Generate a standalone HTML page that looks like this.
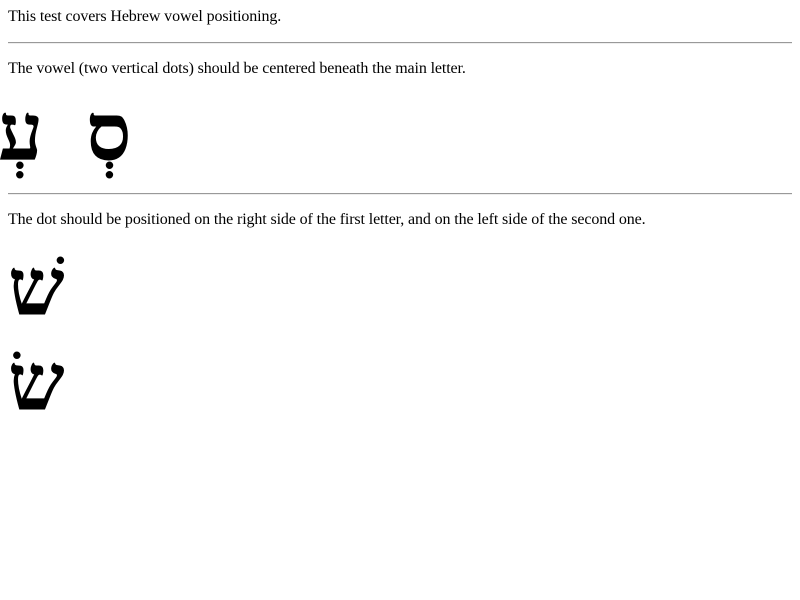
<!DOCTYPE html>
<html><head><meta charset="utf-8"><style>
body{margin:0;font-family:"Liberation Serif",serif;font-size:16px;color:#000;background:#fff}
.t{position:absolute;left:8px;white-space:nowrap;letter-spacing:-0.12px}
.hr{position:absolute;left:8px;width:784px;height:0;border-top:1px solid #999;border-bottom:1px solid #eee}
.h{position:absolute;font-size:80px;font-weight:bold;line-height:1;white-space:nowrap;font-family:"Liberation Serif","DejaVu Serif",serif}
</style></head><body>
<div class="t" style="top:8px">This test covers Hebrew vowel positioning.</div>
<div class="hr" style="top:42px"></div>
<div class="t" style="top:60px">The vowel (two vertical dots) should be centered beneath the main letter.</div>
<div class="h" style="left:-2px;top:94px" dir="rtl">עְ</div>
<div class="h" style="left:86px;top:94px" dir="rtl">סְ</div>
<div class="hr" style="top:193px"></div>
<div class="t" style="top:211px">The dot should be positioned on the right side of the first letter, and on the left side of the second one.</div>
<div class="h" style="left:8px;top:249px" dir="rtl">שׁ</div>
<div class="h" style="left:8px;top:344px" dir="rtl">שׂ</div>
</body></html>
